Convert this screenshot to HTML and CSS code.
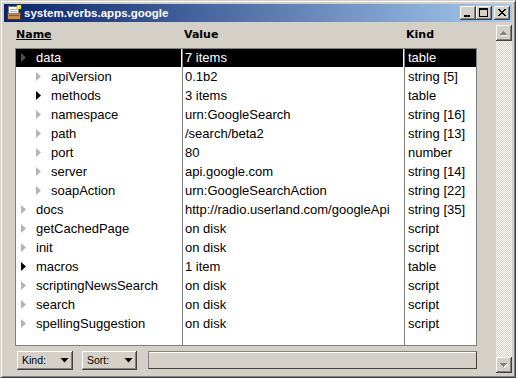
FILE: index.html
```html
<!DOCTYPE html>
<html>
<head>
<meta charset="utf-8">
<title>system.verbs.apps.google</title>
<link rel="stylesheet" href="styles.css">
</head>
<body>
<div class="window">
  <div class="titlebar">
    <svg class="appicon" viewBox="0 0 16 16" width="16" height="16">
      <rect x="1.5" y="7.5" width="13" height="7" fill="#c48a52" stroke="#5a3414"/>
      <rect x="2.5" y="1.5" width="10" height="7" fill="#fff" stroke="#7a7a7a"/>
      <path d="M4 4h7v1H4zM4 6h7v1H4z" fill="#b0b0b0" shape-rendering="crispEdges"/>
      <rect x="3" y="10" width="10" height="1" fill="#8a5526" shape-rendering="crispEdges"/>
      <rect x="11" y="0" width="4" height="4" fill="#ffff40" stroke="#b0a000" stroke-width="0.5"/>
    </svg>
    <span class="title">system.verbs.apps.google</span>
    <div class="capbtns">
      <div class="capbtn"><svg viewBox="0 0 16 14" width="16" height="14" shape-rendering="crispEdges"><path d="M4 9h6v2H4z"/></svg></div>
      <div class="capbtn"><svg viewBox="0 0 16 14" width="16" height="14" shape-rendering="crispEdges"><path d="M3 2h9v2H3zM3 4h1v7H3zM11 4h1v7h-1zM4 10h7v1H4z"/></svg></div>
      <div class="capbtn close"><svg viewBox="0 0 16 14" width="16" height="14" shape-rendering="crispEdges"><path d="M4 3h2v1H4zM10 3h2v1h-2zM5 4h2v1H5zM9 4h2v1H9zM6 5h4v1H6zM7 6h2v1H7zM6 7h4v1H6zM5 8h2v1H5zM9 8h2v1H9zM4 9h2v1H4zM10 9h2v1h-2z"/></svg></div>
    </div>
  </div>
  <div class="client">
    <div class="main">
      <div class="headers">
        <span class="h-name">Name</span>
        <span>Value</span>
        <span>Kind</span>
      </div>
      <div class="list">
        <div class="c n sel"><i class="tri tri-sel"></i><span>data</span></div><div class="c v sel">7 items</div><div class="c k sel">table</div>
        <div class="c n l1"><i class="tri"></i><span>apiVersion</span></div><div class="c v">0.1b2</div><div class="c k">string [5]</div>
        <div class="c n l1"><i class="tri tri-par"></i><span>methods</span></div><div class="c v">3 items</div><div class="c k">table</div>
        <div class="c n l1"><i class="tri"></i><span>namespace</span></div><div class="c v">urn:GoogleSearch</div><div class="c k">string [16]</div>
        <div class="c n l1"><i class="tri"></i><span>path</span></div><div class="c v">/search/beta2</div><div class="c k">string [13]</div>
        <div class="c n l1"><i class="tri"></i><span>port</span></div><div class="c v">80</div><div class="c k">number</div>
        <div class="c n l1"><i class="tri"></i><span>server</span></div><div class="c v">api.google.com</div><div class="c k">string [14]</div>
        <div class="c n l1"><i class="tri"></i><span>soapAction</span></div><div class="c v">urn:GoogleSearchAction</div><div class="c k">string [22]</div>
        <div class="c n"><i class="tri"></i><span>docs</span></div><div class="c v">http://radio.userland.com/googleApi</div><div class="c k">string [35]</div>
        <div class="c n"><i class="tri"></i><span>getCachedPage</span></div><div class="c v">on disk</div><div class="c k">script</div>
        <div class="c n"><i class="tri"></i><span>init</span></div><div class="c v">on disk</div><div class="c k">script</div>
        <div class="c n"><i class="tri tri-par"></i><span>macros</span></div><div class="c v">1 item</div><div class="c k">table</div>
        <div class="c n"><i class="tri"></i><span>scriptingNewsSearch</span></div><div class="c v">on disk</div><div class="c k">script</div>
        <div class="c n"><i class="tri"></i><span>search</span></div><div class="c v">on disk</div><div class="c k">script</div>
        <div class="c n"><i class="tri"></i><span>spellingSuggestion</span></div><div class="c v">on disk</div><div class="c k">script</div>
        <div class="c fill"></div><div class="c fill"></div><div class="c k fill"></div>
      </div>
      <div class="bottombar">
        <div class="popup">Kind:<i class="arrow"></i></div>
        <div class="popup sort">Sort:<i class="arrow"></i></div>
        <div class="status"></div>
      </div>
    </div>
    <div class="scrollbar">
      <div class="sbtn"><svg viewBox="0 0 8 5" width="8" height="5" shape-rendering="crispEdges"><path fill="#fff" d="M4 1h1v1H4zM3 2h3v1H3zM2 3h5v1H2zM1 4h7v1H1z"/><path fill="#808080" d="M3 0h1v1H3zM2 1h3v1H2zM1 2h5v1H1zM0 3h7v1H0z"/></svg></div>
      <div class="track"></div>
      <div class="sbtn"><svg viewBox="0 0 8 5" width="8" height="5" shape-rendering="crispEdges"><path fill="#fff" d="M1 1h7v1H1zM2 2h5v1H2zM3 3h3v1H3zM4 4h1v1H4z"/><path fill="#808080" d="M0 0h7v1H0zM1 1h5v1H1zM2 2h3v1H2zM3 3h1v1H3z"/></svg></div>
    </div>
  </div>
</div>
</body>
</html>
```

FILE: styles.css
```css
* {
  box-sizing: border-box;
}

html,
body {
  margin: 0;
  padding: 0;
}

body {
  width: 516px;
  height: 378px;
  overflow: hidden;
  background: #d4d0c8;
  font-family: "Liberation Sans", Arial, sans-serif;
  font-size: 12px;
  color: #000;
}

.window {
  width: 516px;
  height: 378px;
  background: #d4d0c8;
  border: 1px solid;
  border-color: #d4d0c8 #404040 #404040 #d4d0c8;
  box-shadow: inset 1px 1px #fff, inset -1px -1px #808080;
  padding: 3px;
  display: flex;
  flex-direction: column;
}

/* title bar */
.titlebar {
  height: 18px;
  flex: none;
  display: flex;
  align-items: center;
  padding: 0 2px;
  background: linear-gradient(to right, #0a246a, #a6caf0);
}

.appicon {
  flex: none;
  display: block;
}

.title {
  flex: 1;
  margin-left: 2px;
  color: #fff;
  font-family: "Liberation Sans", Arial, sans-serif;
  font-weight: bold;
  font-size: 11.5px;
  white-space: nowrap;
}

.capbtns {
  display: flex;
  flex: none;
}

.capbtn {
  width: 16px;
  height: 14px;
  background: #d4d0c8;
  box-shadow: inset -1px -1px #404040, inset 1px 1px #fff, inset -2px -2px #808080;
}

.capbtn svg {
  display: block;
  fill: #000;
}

.capbtn.close {
  margin-left: 2px;
}

/* client */
.client {
  flex: 1;
  min-height: 0;
  display: grid;
  grid-template-columns: 1fr 16px;
}

.main {
  padding: 6px 0 0 11px;
  display: flex;
  flex-direction: column;
}

.headers {
  display: grid;
  grid-template-columns: 167px 222px 71px;
  margin-left: 1px;
  height: 14px;
  line-height: 14px;
  font-family: "DejaVu Sans", Verdana, sans-serif;
  font-weight: bold;
  font-size: 11px;
}

.headers span + span {
  padding-left: 1px;
}

.h-name {
  text-decoration: underline;
  text-underline-offset: 1px;
}

/* list */
.list {
  margin-top: 6px;
  width: 462px;
  height: 298px;
  border: 1px solid #808080;
  background: #fff;
  display: grid;
  grid-template-columns: 167px 222px 71px;
  grid-template-rows: repeat(15, 19px) 1fr;
  font-size: 13px;
}

.c {
  border-right: 1px solid #808080;
  line-height: 18px;
  white-space: nowrap;
  overflow: hidden;
}

.c.k {
  border-right: none;
  padding-left: 3px;
}

.c.v {
  padding-left: 2px;
}

.c.n {
  display: flex;
  align-items: flex-start;
  padding-left: 5px;
}

.c.n.l1 {
  padding-left: 20px;
}

.tri {
  flex: none;
  width: 5px;
  height: 9px;
  margin-top: 4px;
  margin-right: 10px;
  background: #b4b4b4;
  clip-path: polygon(0 0, 100% 50%, 0 100%);
}

.tri-par {
  background: #000;
}

.tri-sel {
  background: #505050;
}

.sel {
  color: #fff;
  background: linear-gradient(#000, #000) no-repeat 0 0 / calc(100% - 1px) 18px;
}

.c.k.sel {
  background-size: 100% 18px;
}

/* bottom bar */
.bottombar {
  margin-top: 5px;
  width: 462px;
  height: 19px;
  padding-left: 2px;
  display: flex;
}

.popup {
  flex: none;
  width: 56px;
  height: 19px;
  padding: 0 4px 1px 5px;
  display: flex;
  align-items: center;
  justify-content: space-between;
  font-size: 10.5px;
  background: #d4d0c8;
  box-shadow: inset -1px -1px #404040, inset 1px 1px #fff, inset -2px -2px #808080;
}

.popup.sort {
  width: 55px;
  margin-left: 9px;
}

.arrow {
  width: 9px;
  height: 5px;
  background: #000;
  clip-path: polygon(0 0, 100% 0, 50% 100%);
}

.status {
  flex: 1;
  margin-left: 11px;
  height: 18px;
  border: 1px solid;
  border-color: #808080 #404040 #404040 #808080;
  box-shadow: inset 0 1px #fff;
}

/* scrollbar */
.scrollbar {
  margin: 3px 0 1px;
  display: flex;
  flex-direction: column;
}

.sbtn {
  flex: none;
  height: 16px;
  display: flex;
  align-items: center;
  justify-content: center;
  background: #d4d0c8;
  box-shadow: inset -1px -1px #404040, inset 1px 1px #fff, inset -2px -2px #808080;
}

.sbtn svg {
  display: block;
}

.track {
  flex: 1;
  background-color: #d4d0c8;
  background-image: conic-gradient(#fff 25%, #d4d0c8 0 50%, #fff 0 75%, #d4d0c8 0);
  background-size: 2px 2px;
}
```
